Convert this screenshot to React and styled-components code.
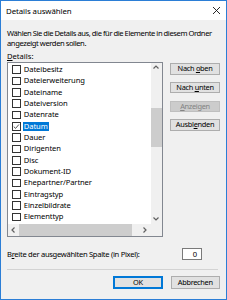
import React from 'react';
import styled, { createGlobalStyle } from 'styled-components';

const Global = createGlobalStyle`
  html, body { margin: 0; padding: 0; background: #fff; }
  body {
    font-family: "Noto Sans", "Open Sans", sans-serif;
    font-size: 7.6px;
    color: #000;
  }
  * { box-sizing: border-box; }
`;

const Window = styled.div`
  width: 227px;
  height: 300px;
  border: 1px solid #2b7ed6;
  background: #f0f0f0;
  display: flex;
  flex-direction: column;
  overflow: hidden;
`;

const TitleBar = styled.div`
  height: 19px;
  flex: none;
  background: #fff;
  display: flex;
  align-items: center;
  justify-content: space-between;
  padding: 0 5px 0 5px;
  font-size: 7.9px;
  letter-spacing: -0.1px;
`;

const Body = styled.div`
  flex: 1;
  display: flex;
  flex-direction: column;
  padding: 7.5px 6px 0 6px;
`;

const Description = styled.p`
  margin: 0 -3px 0 0;
  line-height: 10.5px;
  letter-spacing: -0.4px;
  word-spacing: -0.2px;
`;

const Label = styled.div`
  margin-top: 2px;
  line-height: 10.5px;
`;

const Main = styled.div`
  display: flex;
  gap: 7px;
  margin-top: 0.7px;
`;

const ListBox = styled.div`
  width: 156px;
  height: 175px;
  flex: none;
  border: 1px solid #828790;
  background: #fff;
  display: grid;
  grid-template-columns: 1fr 11.33px;
  grid-template-rows: 1fr 11.33px;
`;

const Items = styled.div`
  overflow: hidden;
  padding-top: 1.3px;
`;

const Row = styled.div`
  height: 11.33px;
  display: flex;
  align-items: center;
  padding-left: 4.3px;
  white-space: nowrap;
`;

const Box = styled.span`
  width: 8.67px;
  height: 8.67px;
  flex: none;
  border: 1px solid #333;
  background: #fff;
  display: flex;
  align-items: center;
  justify-content: center;
`;

const ItemText = styled.span`
  margin-left: 1.6px;
  padding: 0 1.3px;
  line-height: 9.5px;
  letter-spacing: -0.1px;
  background: ${p => (p.$sel ? '#0078d7' : 'transparent')};
  color: ${p => (p.$sel ? '#fff' : '#000')};
`;

const VScroll = styled.div`
  background: #f0f0f0;
  display: flex;
  flex-direction: column;
`;

const ArrowBtn = styled.div`
  width: 11.33px;
  height: 11.33px;
  flex: none;
  display: flex;
  align-items: center;
  justify-content: center;
`;

const VTrack = styled.div`
  flex: 1;
`;

const VThumb = styled.div`
  width: 100%;
  height: 39px;
  background: #cdcdcd;
`;

const HScroll = styled.div`
  background: #f0f0f0;
  display: flex;
`;

const HTrack = styled.div`
  flex: 1;
  display: flex;
`;

const HThumb = styled.div`
  height: 100%;
  width: 113px;
  background: #cdcdcd;
`;

const Corner = styled.div`
  background: #f0f0f0;
`;

const SideButtons = styled.div`
  display: flex;
  flex-direction: column;
  gap: 7.35px;
  padding-top: 1.7px;
`;

const Button = styled.button`
  width: ${p => p.$w || 50}px;
  height: ${p => p.$h || 11.33}px;
  padding: 0;
  margin: 0;
  font-family: inherit;
  font-size: 7.4px;
  letter-spacing: -0.3px;
  line-height: 1;
  white-space: nowrap;
  background: ${p => (p.disabled ? '#cccccc' : '#e1e1e1')};
  color: ${p => (p.disabled ? '#838383' : '#000')};
  border: 1px solid ${p => (p.$default ? '#0078d7' : p.disabled ? '#bfbfbf' : '#adadad')};
  box-shadow: ${p => (p.$default ? 'inset 0 0 0 1px #0078d7' : 'none')};
`;

const WidthRow = styled.div`
  display: flex;
  align-items: center;
  justify-content: space-between;
  margin-top: 11px;
  padding-right: 18px;
`;

const WidthLabel = styled.span`
  letter-spacing: -0.3px;
`;

const NumInput = styled.div`
  width: 20px;
  height: 12px;
  background: #fff;
  border: 1px solid #7a7a7a;
  text-align: right;
  padding-right: 4px;
  line-height: 10px;
`;

const Separator = styled.div`
  height: 1px;
  background: #d3d3d3;
  margin: 9px 2px 0 0;
`;

const Footer = styled.div`
  display: flex;
  justify-content: flex-end;
  gap: 7.7px;
  margin-top: 6px;
`;

const U = styled.span`
  text-decoration: underline;
  text-underline-offset: 1px;
`;

const Chevron = ({ dir }) => {
  const paths = {
    up: 'M1.5 4.5 L4 2 L6.5 4.5',
    down: 'M1.5 2.5 L4 5 L6.5 2.5',
    left: 'M4.5 1.5 L2 4 L4.5 6.5',
    right: 'M2.5 1.5 L5 4 L2.5 6.5',
  };
  return (
    <svg width="8" height="8" viewBox="0 0 8 8">
      <path d={paths[dir]} fill="none" stroke="#606060" strokeWidth="1.2" />
    </svg>
  );
};

const CloseIcon = () => (
  <svg width="9" height="9" viewBox="0 0 9 9">
    <path d="M1 1 L8 8 M8 1 L1 8" stroke="#111" strokeWidth="0.9" />
  </svg>
);

const Check = () => (
  <svg width="7" height="7" viewBox="0 0 7 7">
    <path d="M0.8 3.6 L2.7 5.5 L6.2 1.4" fill="none" stroke="#333" strokeWidth="0.9" />
  </svg>
);

const items = [
  'Dateibesitz',
  'Dateierweiterung',
  'Dateiname',
  'Dateiversion',
  'Datenrate',
  'Datum',
  'Dauer',
  'Dirigenten',
  'Disc',
  'Dokument-ID',
  'Ehepartner/Partner',
  'Eintragstyp',
  'Einzelbildrate',
  'Elementtyp',
  '',
];

export default function App() {
  return (
    <>
      <Global />
      <Window>
        <TitleBar>
          <span>Details auswählen</span>
          <CloseIcon />
        </TitleBar>
        <Body>
          <Description>
            Wählen Sie die Details aus, die für die Elemente in diesem Ordner angezeigt werden sollen.
          </Description>
          <Label>
            <U>D</U>etails:
          </Label>
          <Main>
            <ListBox>
              <Items>
                {items.map((name, i) => (
                  <Row key={i}>
                    <Box>{name === 'Datum' && <Check />}</Box>
                    {name && <ItemText $sel={name === 'Datum'}>{name}</ItemText>}
                  </Row>
                ))}
              </Items>
              <VScroll>
                <ArrowBtn>
                  <Chevron dir="up" />
                </ArrowBtn>
                <VTrack>
                  <VThumb style={{ marginTop: 33.5 }} />
                </VTrack>
                <ArrowBtn>
                  <Chevron dir="down" />
                </ArrowBtn>
              </VScroll>
              <HScroll>
                <ArrowBtn>
                  <Chevron dir="left" />
                </ArrowBtn>
                <HTrack>
                  <HThumb />
                </HTrack>
                <ArrowBtn>
                  <Chevron dir="right" />
                </ArrowBtn>
              </HScroll>
              <Corner />
            </ListBox>
            <SideButtons>
              <Button>
                Nach <U>o</U>ben
              </Button>
              <Button>
                Nach <U>u</U>nten
              </Button>
              <Button disabled>
                <U>A</U>nzeigen
              </Button>
              <Button>
                Ausbl<U>e</U>nden
              </Button>
            </SideButtons>
          </Main>
          <WidthRow>
            <WidthLabel>
              B<U>r</U>eite der ausgewählten Spalte (in Pixel):
            </WidthLabel>
            <NumInput>0</NumInput>
          </WidthRow>
          <Separator />
          <Footer>
            <Button $default $h={13.33}>
              OK
            </Button>
            <Button $h={13.33} $w={49.5}>
              Abbrechen
            </Button>
          </Footer>
        </Body>
      </Window>
    </>
  );
}
